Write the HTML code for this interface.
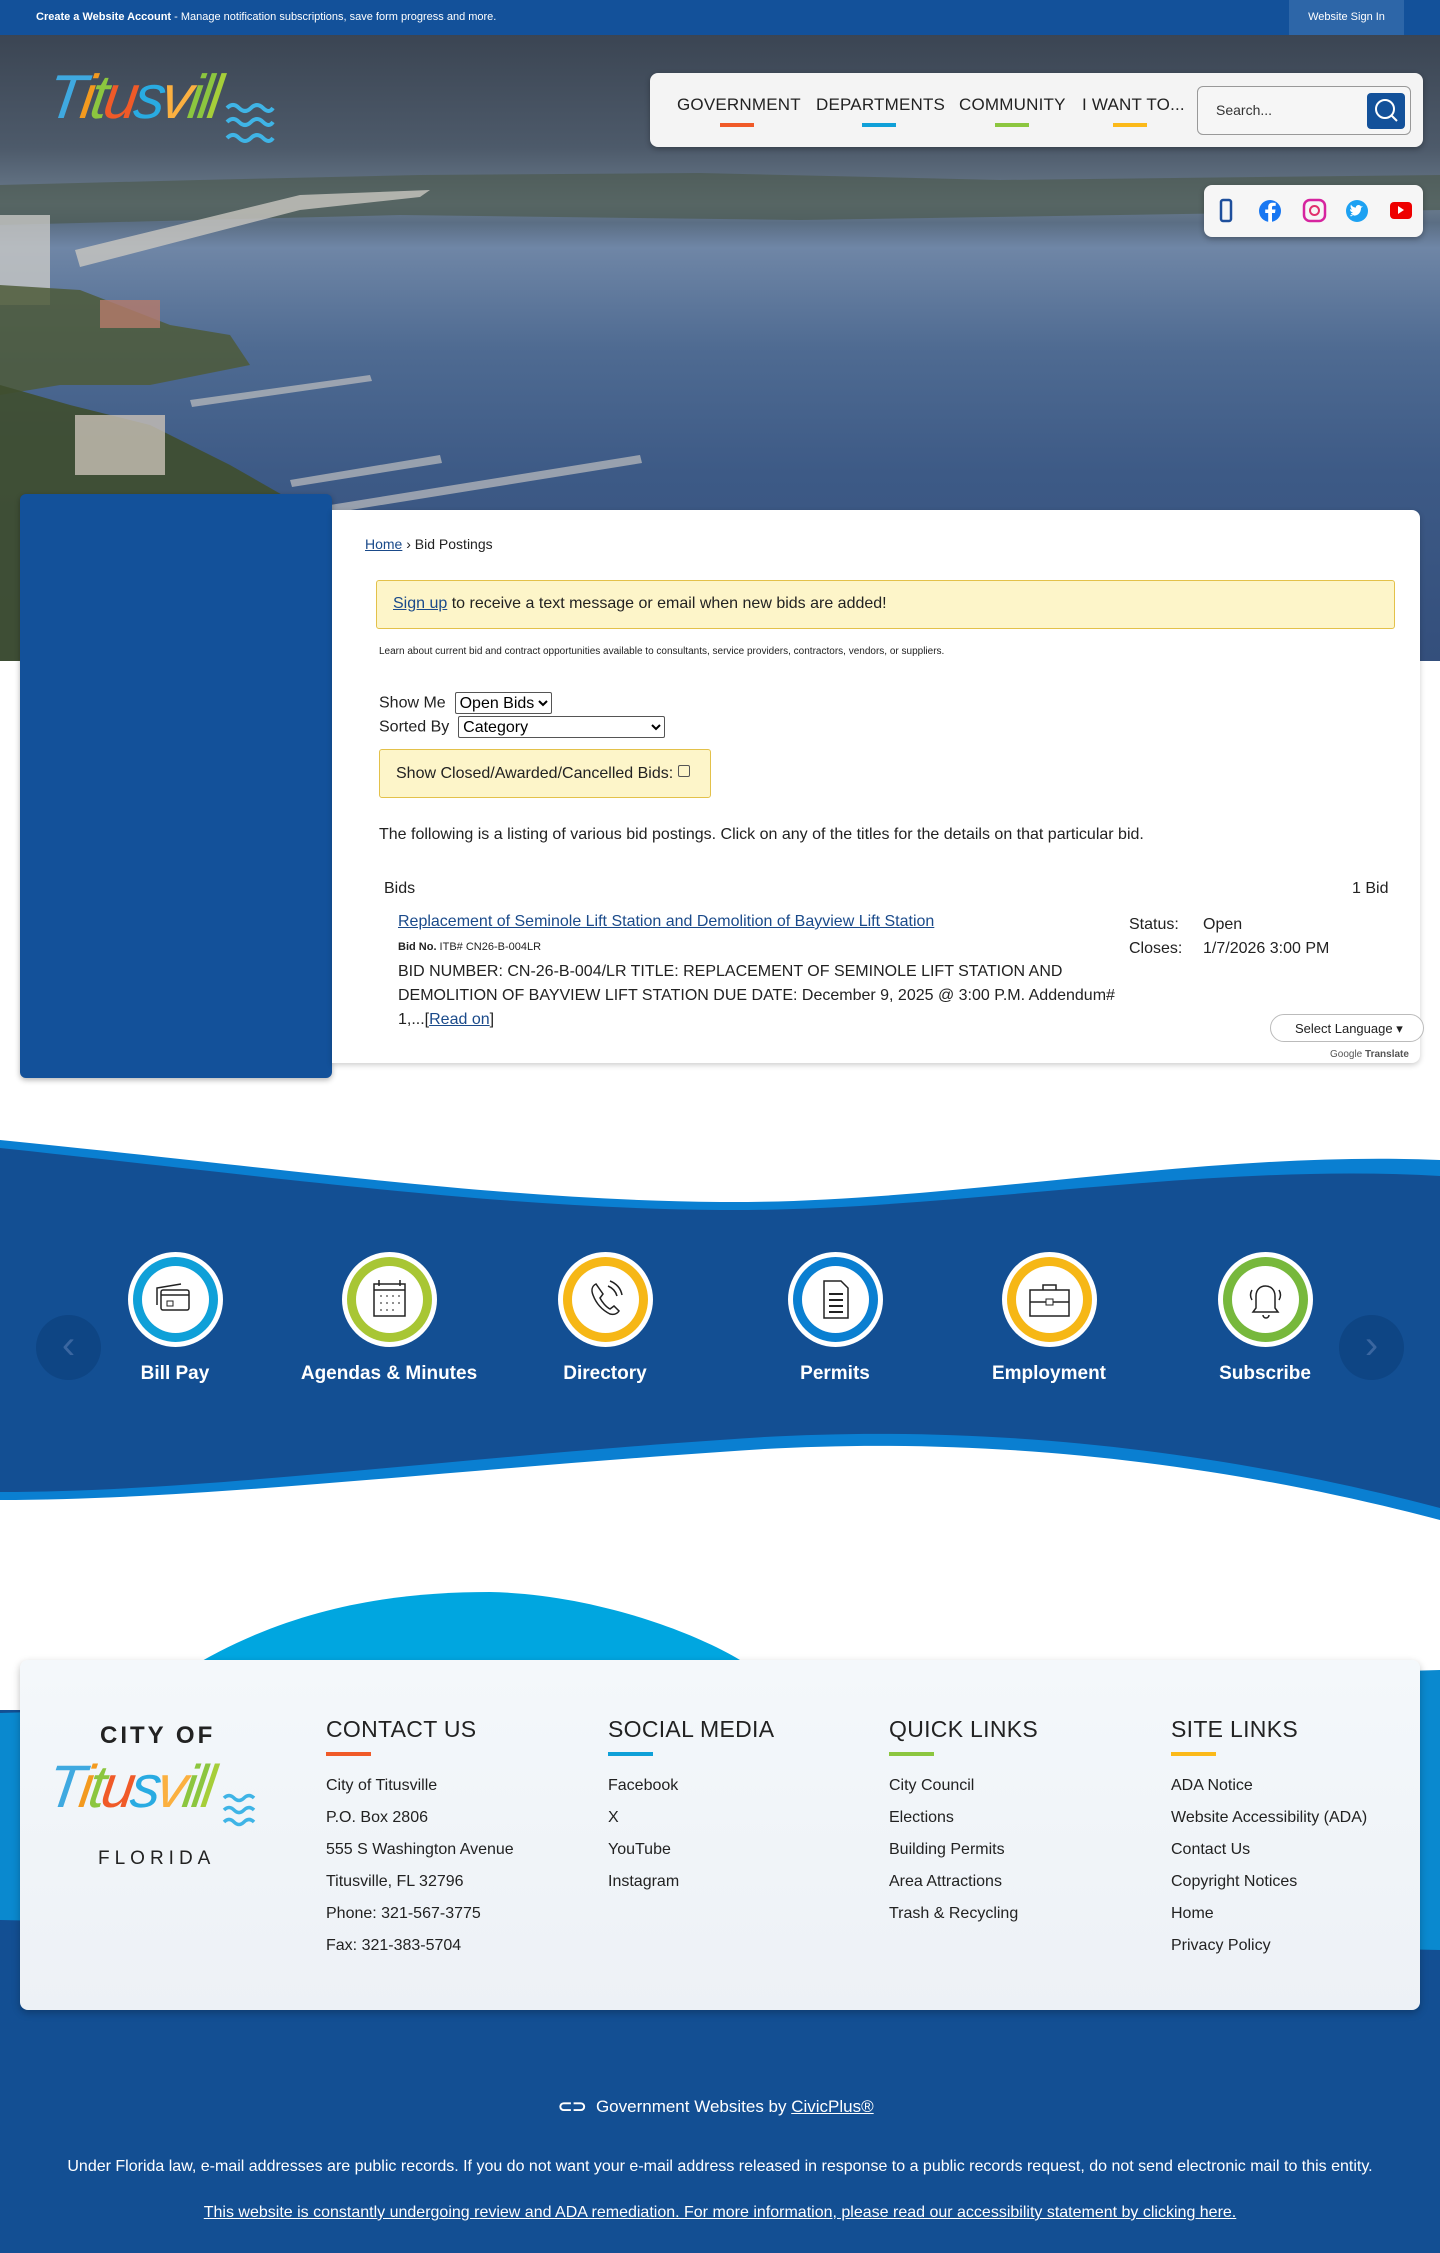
<!DOCTYPE html>
<html><head><meta charset="utf-8"><style>
*{box-sizing:border-box;margin:0;padding:0}
body{width:1440px;height:2253px;position:relative;font-family:"Liberation Sans",sans-serif;background:#fff;overflow:hidden;color:#222}
.abs{position:absolute}
a{color:#1a4a8a}
.top{left:0;top:0;width:1440px;height:35px;background:#13519a;color:#fff;font-size:11px}
.hero{left:0;top:35px;width:1440px;height:626px;background:linear-gradient(180deg,#3b4553 0%,#4d5a6a 18%,#6b7c8e 27%,#5b6e84 30%,#6f86a6 34%,#4f6b92 50%,#3d5a86 70%,#344f7c 100%)}
.logo span{font-family:"Liberation Sans",sans-serif;font-style:italic}
.nav{left:650px;top:73px;width:773px;height:74px;background:#f4f4f4;border-radius:8px;box-shadow:0 2px 6px rgba(0,0,0,.3)}
.nav .it{position:absolute;top:22px;font-size:17px;color:#222;letter-spacing:.2px}
.nav .bar{position:absolute;top:50px;width:34px;height:4px}
.soc{left:1204px;top:185px;width:219px;height:52px;background:#f6f6f6;border-radius:8px;box-shadow:0 2px 6px rgba(0,0,0,.3)}
.side{left:20px;top:494px;width:312px;height:584px;background:#13519a;border-radius:6px;box-shadow:0 2px 6px rgba(0,0,0,.3)}
.main{left:332px;top:510px;width:1088px;height:553px;background:#fff;border-radius:0 8px 8px 0;box-shadow:0 2px 6px rgba(0,0,0,.2)}
.t16{font-size:16px}
select{font-family:"Liberation Sans",sans-serif;font-size:16px;border:1px solid #555;border-radius:2px;background:#fff;height:22px}
.qi{width:95px;height:95px;border-radius:50%;background:#fff;position:absolute;top:1252px}
.qi div{position:absolute;left:5px;top:5px;width:85px;height:85px;border-radius:50%}
.qi div div{left:9px;top:9px;width:67px;height:67px;background:#fff}
.ql{position:absolute;top:1363px;color:#fff;font-size:19px;font-weight:bold;width:240px;text-align:center}
.fh{position:absolute;top:1716px;font-size:23px;color:#222;letter-spacing:.3px}
.fb{position:absolute;top:1752px;width:45px;height:4px}
.fl{position:absolute;font-size:16px;color:#222;line-height:32px}
</style></head><body>
<div class="abs top"><div class="abs" style="left:36px;top:11px"><b>Create a Website Account</b> - Manage notification subscriptions, save form progress and more.</div>
<div class="abs" style="left:1289px;top:0;width:115px;height:35px;background:#2d66a8;text-align:center;line-height:35px">Website Sign In</div></div>

<div class="abs hero">
<svg class="abs" style="left:0;top:0" width="1440" height="626">
<path d="M0 150 L200 145 L420 140 L700 138 L1000 145 L1440 140 L1440 175 L800 185 L400 180 L0 190Z" fill="#4a5648" opacity=".6"/>
<path d="M75 215 L300 160 L430 155 L420 162 L300 175 L80 232Z" fill="#c9c7c0" opacity=".8"/>
<rect x="0" y="180" width="50" height="90" fill="#c8c8c6" opacity=".8"/>
<path d="M0 250 L80 255 L170 290 L230 300 L250 330 L150 350 L60 350 L0 360Z" fill="#4d5a3a" opacity=".85"/>
<path d="M0 350 L70 370 L150 390 L230 430 L300 470 L360 510 L460 570 L480 626 L0 626Z" fill="#3f4e2e" opacity=".9"/>
<rect x="75" y="380" width="90" height="60" fill="#c9c0b6" opacity=".8"/>
<rect x="100" y="265" width="60" height="28" fill="#b57a6a" opacity=".8"/>
<path d="M190 365 L370 340 L372 346 L192 372Z M290 445 L440 420 L442 428 L292 452Z M330 470 L640 420 L642 428 L332 478Z" fill="#bfbfbf" opacity=".7"/>
</svg>
</div>
<div class="abs logo" style="left:48px;top:62px;font-size:62px;letter-spacing:-4px;transform:skewX(-8deg)">
<span style="color:#3fa9e0">T</span><span style="color:#f39a1f">i</span><span style="color:#8cc63f">t</span><span style="color:#f05a28">u</span><span style="color:#29abe2">s</span><span style="color:#fbb040">v</span><span style="color:#8cc63f">i</span><span style="color:#8cc63f">l</span><span style="color:#a6ce39">l</span></div>
<svg class="abs" style="left:225px;top:98px" width="50" height="50"><path d="M2 10q6-6 12 0t12 0 12 0 10 0M2 24q6-6 12 0t12 0 12 0 10 0M2 40q6-6 12 0t12 0 12 0 10 0" stroke="#3fb4e6" stroke-width="4" fill="none"/></svg>

<div class="abs nav">
<div class="it" style="left:27px">GOVERNMENT</div><div class="bar" style="left:70px;background:#f05a28"></div>
<div class="it" style="left:166px">DEPARTMENTS</div><div class="bar" style="left:212px;background:#0fa0d8"></div>
<div class="it" style="left:309px">COMMUNITY</div><div class="bar" style="left:345px;background:#8cc63f"></div>
<div class="it" style="left:432px">I WANT TO...</div><div class="bar" style="left:463px;background:#fbb919"></div>
<div class="abs" style="left:547px;top:13px;width:214px;height:49px;border:1px solid #999;border-radius:6px;background:#f6f6f6">
<div class="abs" style="left:18px;top:15px;font-size:14px;color:#333">Search...</div>
<div class="abs" style="left:169px;top:6px;width:38px;height:36px;background:#13519a;border-radius:4px">
<svg width="38" height="36"><circle cx="18" cy="16" r="9" stroke="#fff" stroke-width="2" fill="none"/><path d="M24 22l6 6" stroke="#fff" stroke-width="2"/></svg></div></div>
</div>
<div class="abs soc"><svg width="219" height="52">
<rect x="17" y="15" width="10" height="21" rx="2" fill="none" stroke="#1e4f9c" stroke-width="2.5"/>
<circle cx="66" cy="26" r="11" fill="#1877f2"/><path d="M68 37v-9h3l.5-3.5H68v-2c0-1 .4-1.6 1.7-1.6h2v-3c-.5 0-1.5-.2-3-.2-3 0-4.5 1.7-4.5 4.6v2.2h-3V28h3v9z" fill="#fff"/>
<rect x="100" y="15" width="21" height="21" rx="6" fill="none" stroke="#d6249f" stroke-width="2.5"/><circle cx="110.5" cy="25.5" r="4.5" fill="none" stroke="#e1306c" stroke-width="2"/>
<circle cx="153" cy="26" r="11" fill="#1da1f2"/><path d="M147 30c5 2 10-1 10-7l2-2-2 .5c-1-2-4-2-5 0v1c-2 0-4-1-5-3-1 2 0 4 1 5-1 0-1.5 0-2-.5 0 2 1 3 3 3.5-1 .5-2 .5-2 .5 0 1 1 2 3 2-1 1-3 1.5-4 1z" fill="#fff"/>
<rect x="186" y="17" width="22" height="17" rx="4" fill="#e00"/><path d="M194 21l6 4-6 4z" fill="#fff"/>
</svg></div>

<div class="abs side"></div>
<div class="abs main">
<div class="abs" style="left:33px;top:26px;font-size:14px"><a href="#">Home</a> › Bid Postings</div>
<div class="abs" style="left:44px;top:70px;width:1019px;height:49px;background:#fdf5c9;border:1px solid #e3c14a;border-radius:3px;font-size:16px;padding:14px 0 0 16px"><a href="#">Sign up</a> to receive a text message or email when new bids are added!</div>
<div class="abs" style="left:47px;top:136px;font-size:10px">Learn about current bid and contract opportunities available to consultants, service providers, contractors, vendors, or suppliers.</div>
<div class="abs t16" style="left:47px;top:182px">Show Me &nbsp;<select style="width:97px"><option>Open Bids</option></select></div>
<div class="abs t16" style="left:47px;top:206px">Sorted By &nbsp;<select style="width:207px"><option>Category</option></select></div>
<div class="abs t16" style="left:47px;top:239px;width:332px;height:49px;background:#fdf5c9;border:1px solid #e3c14a;border-radius:3px;padding:15px 0 0 16px">Show Closed/Awarded/Cancelled Bids: <span style="display:inline-block;width:12px;height:12px;border:1px solid #555;border-radius:2px;vertical-align:1px"></span></div>
<div class="abs t16" style="left:47px;top:316px">The following is a listing of various bid postings. Click on any of the titles for the details on that particular bid.</div>
<div class="abs t16" style="left:52px;top:370px">Bids</div>
<div class="abs t16" style="left:1020px;top:370px">1 Bid</div>
<div class="abs t16" style="left:66px;top:403px"><a href="#">Replacement of Seminole Lift Station and Demolition of Bayview Lift Station</a></div>
<div class="abs" style="left:66px;top:431px;font-size:11px"><b>Bid No.</b> ITB# CN26-B-004LR</div>
<div class="abs t16" style="left:66px;top:450px;width:730px;line-height:24px">BID NUMBER: CN-26-B-004/LR TITLE: REPLACEMENT OF SEMINOLE LIFT STATION AND DEMOLITION OF BAYVIEW LIFT STATION DUE DATE: December 9, 2025 @ 3:00 P.M. Addendum# 1,...[<a href="#">Read on</a>]</div>
<div class="abs t16" style="left:797px;top:403px;line-height:24px">Status:<br>Closes:</div>
<div class="abs t16" style="left:871px;top:403px;line-height:24px">Open<br>1/7/2026 3:00 PM</div>
</div>
<div class="abs" style="left:1270px;top:1014px;width:154px;height:28px;border:1px solid #bbb;border-radius:14px;background:#fff;font-size:13px;padding:6px 0 0 24px">Select Language ▾</div>
<div class="abs" style="left:1330px;top:1049px;font-size:10px;color:#555">Google <b>Translate</b></div>

<svg class="abs" style="left:0;top:1140px" width="1440" height="440">
<path d="M0 0 C300 30 500 60 720 62 C950 64 1200 10 1440 20 L1440 380 C1250 330 1000 290 720 312 C450 330 200 360 0 360Z" fill="#0a7fd1"/>
<path d="M0 8 C300 40 500 68 720 70 C950 72 1200 22 1440 36 L1440 368 C1250 318 1000 278 720 300 C450 318 200 352 0 352Z" fill="#134f93"/>
</svg>
<div class="abs" style="left:36px;top:1315px;width:65px;height:65px;border-radius:50%;background:#0e4584;color:#3a66a0;font-size:40px;text-align:center;line-height:60px">‹</div>
<div class="abs" style="left:1339px;top:1315px;width:65px;height:65px;border-radius:50%;background:#0e4584;color:#3a66a0;font-size:40px;text-align:center;line-height:60px">›</div>

<div class="qi" style="left:128px"><div style="background:#0fa0d8"><div><svg width="67" height="67"><rect x="19" y="24" width="28" height="20" rx="2" fill="none" stroke="#222" stroke-width="1.5"/><path d="M19 29h28M15 39V22l24-4" stroke="#222" stroke-width="1.5" fill="none"/><rect x="25" y="35" width="6" height="5" fill="none" stroke="#222"/></svg></div></div></div>
<div class="qi" style="left:342px"><div style="background:#a8c634"><div><svg width="67" height="67"><rect x="18" y="18" width="31" height="32" fill="none" stroke="#222" stroke-width="1.5"/><path d="M18 24h31M23 14v6M44 14v6" stroke="#222" stroke-width="1.5"/><path d="M24 30h2M30 30h2M36 30h2M42 30h2M24 37h2M30 37h2M36 37h2M42 37h2M24 44h2M30 44h2M36 44h2" stroke="#222"/></svg></div></div></div>
<div class="qi" style="left:558px"><div style="background:#f6b716"><div><svg width="67" height="67"><path d="M24 18c-4 2-5 6-3 11 3 8 9 15 17 19 4 1 7 0 9-3l-5-5-4 3c-4-2-8-7-10-11l3-4z" fill="none" stroke="#222" stroke-width="1.5"/><path d="M36 20q7 3 9 10M38 15q10 4 12 14" stroke="#222" stroke-width="1.5" fill="none"/></svg></div></div></div>
<div class="qi" style="left:788px"><div style="background:#0a7fd1"><div><svg width="67" height="67"><path d="M22 15h17l7 7v30H22z" fill="none" stroke="#222" stroke-width="1.5"/><path d="M27 28h14M27 34h14M27 40h14M27 46h14" stroke="#222" stroke-width="2"/></svg></div></div></div>
<div class="qi" style="left:1002px"><div style="background:#f6b716"><div><svg width="67" height="67"><rect x="14" y="24" width="39" height="26" fill="none" stroke="#222" stroke-width="1.5"/><path d="M27 24v-5h13v5M14 36h39" stroke="#222" stroke-width="1.5" fill="none"/><rect x="30" y="33" width="7" height="6" fill="#fff" stroke="#222"/></svg></div></div></div>
<div class="qi" style="left:1218px"><div style="background:#77b83c"><div><svg width="67" height="67"><path d="M21 46h25l-3-4V30c0-6-4-10-9.5-10S24 24 24 30v12z" fill="none" stroke="#222" stroke-width="1.5"/><path d="M31 49a3 3 0 0 0 6 0M20 24q-3 5 0 10M47 24q3 5 0 10" stroke="#222" stroke-width="1.5" fill="none"/></svg></div></div></div>
<div class="ql" style="left:55px">Bill Pay</div>
<div class="ql" style="left:269px">Agendas &amp; Minutes</div>
<div class="ql" style="left:485px">Directory</div>
<div class="ql" style="left:715px">Permits</div>
<div class="ql" style="left:929px">Employment</div>
<div class="ql" style="left:1145px">Subscribe</div>

<svg class="abs" style="left:0;top:1580px" width="1440" height="673">
<rect x="0" y="0" width="1440" height="673" fill="#134f93"/>
<rect x="0" y="0" width="1440" height="130" fill="#fff"/>
<path d="M200 82 C300 25 400 12 490 12 C590 14 690 50 740 80 L740 130 L200 130Z" fill="#00a6e0"/>
<path d="M0 133 L1440 90 L1440 370 L0 340Z" fill="#0a89cf"/>
</svg>
<div class="abs" style="left:20px;top:1660px;width:1400px;height:350px;border-radius:8px;background:linear-gradient(180deg,#f4f8fb,#edf1f6);box-shadow:0 3px 8px rgba(0,0,0,.25)"></div>
<div class="abs" style="left:100px;top:1722px;font-size:24px;font-weight:bold;letter-spacing:3px;color:#222">CITY OF</div>
<div class="abs logo" style="left:48px;top:1752px;font-size:60px;letter-spacing:-4px;transform:skewX(-8deg)">
<span style="color:#3fa9e0">T</span><span style="color:#f39a1f">i</span><span style="color:#8cc63f">t</span><span style="color:#f05a28">u</span><span style="color:#29abe2">s</span><span style="color:#fbb040">v</span><span style="color:#8cc63f">i</span><span style="color:#8cc63f">l</span><span style="color:#a6ce39">l</span></div>
<svg class="abs" style="left:222px;top:1790px" width="42" height="40"><path d="M2 8q5-5 10 0t10 0 10 0M2 20q5-5 10 0t10 0 10 0M2 32q5-5 10 0t10 0 10 0" stroke="#3fb4e6" stroke-width="3.5" fill="none"/></svg>
<div class="abs" style="left:98px;top:1848px;font-size:19px;letter-spacing:5px;color:#222">FLORIDA</div>

<div class="fh" style="left:326px">CONTACT US</div><div class="fb" style="left:326px;background:#f05a28"></div>
<div class="fh" style="left:608px">SOCIAL MEDIA</div><div class="fb" style="left:608px;background:#0fa0d8"></div>
<div class="fh" style="left:889px">QUICK LINKS</div><div class="fb" style="left:889px;background:#8cc63f"></div>
<div class="fh" style="left:1171px">SITE LINKS</div><div class="fb" style="left:1171px;background:#fbb919"></div>
<div class="fl" style="left:326px;top:1770px">City of Titusville<br>P.O. Box 2806<br>555 S Washington Avenue<br>Titusville, FL 32796<br>Phone: 321-567-3775<br>Fax: 321-383-5704</div>
<div class="fl" style="left:608px;top:1770px">Facebook<br>X<br>YouTube<br>Instagram</div>
<div class="fl" style="left:889px;top:1770px">City Council<br>Elections<br>Building Permits<br>Area Attractions<br>Trash &amp; Recycling</div>
<div class="fl" style="left:1171px;top:1770px">ADA Notice<br>Website Accessibility (ADA)<br>Contact Us<br>Copyright Notices<br>Home<br>Privacy Policy</div>

<div class="abs" style="left:558px;top:2097px;color:#fff;font-size:17px"><span style="font-weight:bold">⊂⊃</span>&nbsp; Government Websites by <u>CivicPlus®</u></div>
<div class="abs" style="left:0;top:2158px;width:1440px;text-align:center;color:#fff;font-size:16px">Under Florida law, e-mail addresses are public records. If you do not want your e-mail address released in response to a public records request, do not send electronic mail to this entity.</div>
<div class="abs" style="left:0;top:2204px;width:1440px;text-align:center;color:#fff;font-size:16px"><u>This website is constantly undergoing review and ADA remediation. For more information, please read our accessibility statement by clicking here.</u></div>
</body></html>
